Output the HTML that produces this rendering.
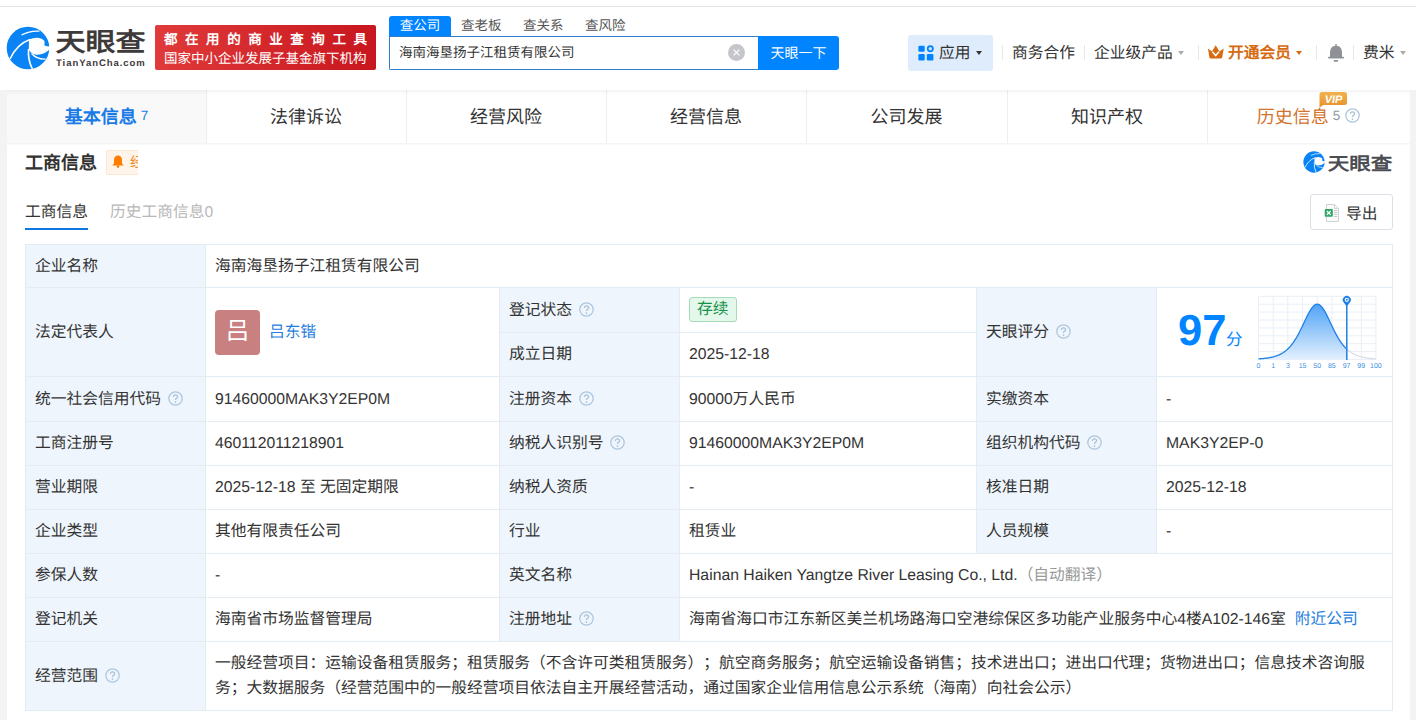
<!DOCTYPE html>
<html lang="zh-CN"><head><meta charset="utf-8">
<style>
*{margin:0;padding:0;box-sizing:border-box}
html,body{text-rendering:geometricPrecision;text-spacing-trim:space-all;width:1416px;height:720px;overflow:hidden;background:#f3f3f3;font-family:"Liberation Sans",sans-serif;color:#333}
.a{position:absolute}
.c{position:absolute;border:1px solid #e3ebf3}
.ct{position:absolute;left:0;top:0;right:0;bottom:0;display:flex;align-items:center;font-size:15.75px;white-space:nowrap}
.ln{position:absolute;background:#e3ebf3}
.in{line-height:23px}
.z{position:relative;top:0px}
.qs{margin-left:6.5px;position:relative;top:-1px;vertical-align:middle}
.av{display:block;width:45px;height:45px;border-radius:4px;background:#c98080;color:#fff;font-size:24px;line-height:44px;text-align:center}
.lk{color:#1f80e0}
.tag{display:block;height:25px;line-height:23px;padding:0 7px;border:1px solid #a6dab8;background:#e3f8ea;color:#17904a;border-radius:3px;font-size:15.75px;margin-top:-1px}
.scope{white-space:normal;line-height:25px;width:1160px}
</style></head><body>
<!-- header -->
<div class="a" style="left:0;top:0;width:1416px;height:90px;background:#fff"></div>
<div class="a" style="left:0;top:6px;width:1416px;height:1px;background:#e3e3e3"></div>

<!-- logo -->
<svg class="a" style="left:4px;top:24px" width="48" height="48" viewBox="0 0 48 48"><circle cx="24" cy="24" r="21.3" fill="#0a84f5"/><path d="M25 15.5Q35 11.5 40.5 17L40.5 21.5Q43 22.5 46 22.5L46 25Q40 31.5 31 30.5Q26.5 29.5 24.8 25.5Z" fill="#fff"/><path d="M17.5 11Q26 6.5 35.5 7.2" fill="none" stroke="#fff" stroke-width="1.3"/><path d="M6 35Q13 20 26 15.5" fill="none" stroke="#fff" stroke-width="1.6"/><path d="M24.6 25Q23.6 36 28.6 45.5" fill="none" stroke="#fff" stroke-width="1.6"/><path d="M27.5 29.5Q33 35.5 41.5 35" fill="none" stroke="#fff" stroke-width="1.3"/></svg>
<div class="a" style="left:55.5px;top:29px;font-size:30px;font-weight:bold;color:#3e3a39;line-height:34px;letter-spacing:0px;transform:scaleY(0.86);transform-origin:0 0">天眼查</div>
<div class="a" style="left:56px;top:57.5px;font-size:9.5px;font-weight:bold;color:#3e3a39;line-height:12px;letter-spacing:0.95px">TianYanCha.com</div>

<!-- red badge -->
<div class="a" style="left:155px;top:25px;width:221px;height:45px;background:linear-gradient(90deg,#e03a3a,#c8161e);border-radius:2px"></div>
<div class="a" style="left:164px;top:31px;font-size:13.5px;color:#fff;line-height:18px;letter-spacing:7.55px;font-weight:bold">都在用的商业查询工具</div>
<div class="a" style="left:164px;top:49.5px;font-size:13.5px;color:#fff;line-height:18px">国家中小企业发展子基金旗下机构</div>

<!-- search -->
<div class="a" style="left:389px;top:16px;width:62px;height:21px;background:#0084ff;border-radius:3px 3px 0 0"></div>
<div class="a" style="left:389px;top:16px;width:62px;line-height:19px;text-align:center;font-size:13.5px;color:#fff">查公司</div>
<div class="a" style="left:461px;top:16px;line-height:19px;font-size:13.5px;color:#555">查老板</div>
<div class="a" style="left:523px;top:16px;line-height:19px;font-size:13.5px;color:#555">查关系</div>
<div class="a" style="left:585px;top:16px;line-height:19px;font-size:13.5px;color:#555">查风险</div>
<div class="a" style="left:389px;top:36px;width:370px;height:34px;border:1px solid #2f7fd0;border-right:none;background:#fff;border-radius:0 0 0 2px"></div>
<div class="a" style="left:399px;top:35px;line-height:35px;font-size:13.5px;color:#333">海南海垦扬子江租赁有限公司</div>
<svg class="a" style="left:728px;top:44px" width="17" height="17" viewBox="0 0 17 17"><circle cx="8.5" cy="8.5" r="8.5" fill="#c4c6cc"/><path d="M5.6 5.6l5.8 5.8M11.4 5.6l-5.8 5.8" stroke="#fff" stroke-width="1.2"/></svg>
<div class="a" style="left:758px;top:36px;width:81px;height:34px;background:#0084ff;border-radius:0 3px 3px 0;color:#fff;font-size:14px;line-height:34px;text-align:center">天眼一下</div>

<!-- right nav -->
<div class="a" style="left:908px;top:35px;width:85px;height:36px;background:#deecfb;border-radius:3px"></div>
<svg class="a" style="left:918px;top:45px" width="16" height="16" viewBox="0 0 16 16"><rect x="0.4" y="0.7" width="6.3" height="6.1" rx="1.2" fill="#0084ff"/><circle cx="12.3" cy="3.75" r="2.6" fill="#bfe0ff" stroke="#0084ff" stroke-width="1.7"/><rect x="0.4" y="9.1" width="6.3" height="6.4" rx="1.2" fill="#0084ff"/><rect x="8.8" y="9.1" width="6.6" height="6.4" rx="1.2" fill="#0084ff"/></svg>
<div class="a" style="left:939px;top:42px;line-height:24px;font-size:15.75px;color:#333">应用</div>
<div class="a" style="left:976px;top:51px;width:0;height:0;border-left:3.7px solid transparent;border-right:3.7px solid transparent;border-top:4px solid #333"></div>

<div class="a" style="left:1002px;top:45px;width:1px;height:15px;background:#e8e8e8"></div>
<div class="a" style="left:1012px;top:42px;line-height:24px;font-size:15.75px;color:#333">商务合作</div>
<div class="a" style="left:1084px;top:45px;width:1px;height:15px;background:#e8e8e8"></div>
<div class="a" style="left:1094px;top:42px;line-height:24px;font-size:15.75px;color:#333">企业级产品</div>
<div class="a" style="left:1178px;top:51px;width:0;height:0;border-left:3.7px solid transparent;border-right:3.7px solid transparent;border-top:4px solid #aaa"></div>
<div class="a" style="left:1198px;top:45px;width:1px;height:15px;background:#e8e8e8"></div>
<svg class="a" style="left:1207px;top:44px" width="18" height="16" viewBox="0 0 18 16"><path d="M1 4.5L5 7.6L8.7 1.2L12.4 7.6L16.7 4.5L15.3 13Q15 14.6 13.5 14.6L4 14.6Q2.5 14.6 2.3 13Z" fill="#d66b12"/><path d="M5.4 7.7L8.7 11.6L12 7.7" fill="none" stroke="#fff" stroke-width="1.5"/></svg>
<div class="a" style="left:1228px;top:42px;line-height:24px;font-size:15.75px;color:#d66b12;font-weight:bold">开通会员</div>
<div class="a" style="left:1296px;top:51px;width:0;height:0;border-left:3.7px solid transparent;border-right:3.7px solid transparent;border-top:4px solid #d66b12"></div>
<div class="a" style="left:1316px;top:45px;width:1px;height:15px;background:#e8e8e8"></div>
<svg class="a" style="left:1327px;top:43px" width="18" height="20" viewBox="0 0 18 20"><path d="M9 2.8C4.6 2.8 3 6 3 10L3 14.2L15 14.2L15 10C15 6 13.4 2.8 9 2.8Z" fill="#8e9297"/><rect x="8.3" y="1" width="1.4" height="2.5" fill="#8e9297"/><rect x="1" y="13.8" width="16" height="1.7" rx=".8" fill="#8e9297"/><rect x="6.6" y="17" width="4.6" height="1.7" rx=".8" fill="#8e9297"/></svg>
<div class="a" style="left:1353px;top:45px;width:1px;height:15px;background:#e8e8e8"></div>
<div class="a" style="left:1363px;top:42px;line-height:24px;font-size:15.75px;color:#333">费米</div>
<div class="a" style="left:1400px;top:51px;width:0;height:0;border-left:3.7px solid transparent;border-right:3.7px solid transparent;border-top:4px solid #aaa"></div>

<!-- tabs bar -->
<div class="a" style="left:7px;top:90px;width:1403px;height:53px;background:#fff"></div>
<div class="a" style="left:7px;top:90px;width:199px;height:53px;background:#f9f9fa"></div>
<div class="a" style="left:7px;top:91px;width:199px;line-height:53px;text-align:center;font-size:18px;color:#1a7ae6;font-weight:bold">基本信息<span style="font-size:13.5px;font-weight:normal;margin-left:4px;position:relative;top:-3px">7</span></div>
<div class="a" style="left:206px;top:90px;width:1px;height:53px;background:#eee"></div>
<div class="a" style="left:206px;top:91px;width:200px;line-height:53px;text-align:center;font-size:18px;color:#333">法律诉讼</div>
<div class="a" style="left:406px;top:90px;width:1px;height:53px;background:#eee"></div>
<div class="a" style="left:406px;top:91px;width:200px;line-height:53px;text-align:center;font-size:18px;color:#333">经营风险</div>
<div class="a" style="left:606px;top:90px;width:1px;height:53px;background:#eee"></div>
<div class="a" style="left:606px;top:91px;width:200px;line-height:53px;text-align:center;font-size:18px;color:#333">经营信息</div>
<div class="a" style="left:806px;top:90px;width:1px;height:53px;background:#eee"></div>
<div class="a" style="left:806px;top:91px;width:201px;line-height:53px;text-align:center;font-size:18px;color:#333">公司发展</div>
<div class="a" style="left:1007px;top:90px;width:1px;height:53px;background:#eee"></div>
<div class="a" style="left:1007px;top:91px;width:200px;line-height:53px;text-align:center;font-size:18px;color:#333">知识产权</div>
<div class="a" style="left:1207px;top:90px;width:1px;height:53px;background:#eee"></div>
<div class="a" style="left:1207px;top:91px;width:203px;line-height:53px;text-align:center;font-size:18px;color:#d2732e">历史信息<span style="font-size:13.5px;color:#8e99a5;margin-left:4px;position:relative;top:-3px">5</span><svg class="qs" style="vertical-align:-1px;margin-left:5px" width="15" height="15" viewBox="0 0 15 15"><circle cx="7.5" cy="7.5" r="6.7" fill="none" stroke="#aec6de" stroke-width="1.25"/><path d="M5.4 5.9C5.4 4.6 6.3 3.8 7.5 3.8C8.7 3.8 9.6 4.6 9.6 5.7C9.6 6.8 8.5 7.1 7.9 7.8C7.6 8.1 7.5 8.5 7.5 9.1" fill="none" stroke="#a8c0d8" stroke-width="1.25"/><circle cx="7.5" cy="11.1" r=".85" fill="#a8c0d8"/></svg></div>
<svg class="a" style="left:1318px;top:91px" width="30" height="17" viewBox="0 0 30 17"><defs><linearGradient id="vg" x1="0" y1="0" x2="0" y2="1"><stop offset="0" stop-color="#f4b54e"/><stop offset="1" stop-color="#e4902c"/></linearGradient></defs><path d="M4 1h22.5a2.5 2.5 0 0 1 2.5 2.5v8a2.5 2.5 0 0 1-2.5 2.5H5.5L1.5 16.5L1.5 3.5A2.5 2.5 0 0 1 4 1z" fill="url(#vg)"/><text x="15.5" y="11.6" text-anchor="middle" font-family="Liberation Sans, sans-serif" font-size="11" font-weight="bold" font-style="italic" fill="#fff">VIP</text></svg>
<div class="a" style="left:7px;top:90px;width:1403px;height:5px;background:linear-gradient(rgba(0,0,0,0.045),rgba(0,0,0,0))"></div>
<!-- card -->
<div class="a" style="left:7px;top:143px;width:1403px;height:577px;background:#fff"></div>
<div class="a" style="left:7px;top:143px;width:1403px;height:2px;background:linear-gradient(rgba(0,0,0,0.05),rgba(0,0,0,0.01))"></div>
<div class="a" style="left:25px;top:149px;line-height:28px;font-size:18px;font-weight:bold;color:#333">工商信息</div>
<div class="a" style="left:106px;top:150px;width:32px;height:25px;background:#fff4ea;border:1px solid #fbe6d2;border-right:none;border-radius:2px 0 0 2px"></div>
<svg class="a" style="left:112px;top:155px" width="12" height="13" viewBox="0 0 12 13"><path d="M6 0.5c-2.4 0-4 1.8-4 4.2v3.8L0.3 10.6h11.4L10 8.5V4.7C10 2.3 8.4 0.5 6 0.5z" fill="#ff7e00"/><circle cx="6" cy="11.6" r="1.3" fill="#ff7e00"/></svg>
<div class="a" style="left:130px;top:151px;width:7.5px;height:22px;overflow:hidden;"><div style="font-size:14px;line-height:22px;color:#e8891c">经</div></div>

<!-- right logo -->
<svg class="a" style="left:1301.9px;top:150px" width="24" height="24" viewBox="0 0 48 48"><circle cx="24" cy="24" r="21.3" fill="#0a84f5"/><path d="M25 15.5Q35 11.5 40.5 17L40.5 21.5Q43 22.5 46 22.5L46 25Q40 31.5 31 30.5Q26.5 29.5 24.8 25.5Z" fill="#fff"/><path d="M17.5 11Q26 6.5 35.5 7.2" fill="none" stroke="#fff" stroke-width="1.3"/><path d="M6 35Q13 20 26 15.5" fill="none" stroke="#fff" stroke-width="1.6"/><path d="M24.6 25Q23.6 36 28.6 45.5" fill="none" stroke="#fff" stroke-width="1.6"/><path d="M27.5 29.5Q33 35.5 41.5 35" fill="none" stroke="#fff" stroke-width="1.3"/></svg>
<div class="a" style="left:1327.8px;top:154px;font-size:21.5px;font-weight:bold;color:#4b4d52;line-height:24px;transform:scaleY(0.84);transform-origin:0 0">天眼查</div>

<!-- subtabs -->
<div class="a" style="left:25px;top:200.5px;line-height:24px;font-size:15.75px;color:#333">工商信息</div>
<div class="a" style="left:25px;top:228px;width:63px;height:2px;background:#0f78e0"></div>
<div class="a" style="left:110px;top:200.5px;line-height:24px;font-size:15.75px;color:#b8b8b8">历史工商信息0</div>
<div class="a" style="left:1310px;top:194px;width:83px;height:36px;border:1px solid #dcdfe6;border-radius:3px;background:#fff"></div>
<svg class="a" style="left:1324px;top:203px" width="17" height="19" viewBox="0 0 17 19"><path d="M2.5 1.5h8l4 4v13h-12z" fill="#fafafa" stroke="#cfd2d6" stroke-width="1"/><path d="M10.5 1.5v4h4" fill="none" stroke="#cfd2d6"/><path d="M10 7.5h3.3M10 9.5h3.3M10 11.5h3.3M10 13.5h3.3" stroke="#c9cccf" stroke-width="1"/><rect x="0.7" y="6" width="8.1" height="7.8" rx="1" fill="#2ea560"/><path d="M2.8 8l3.9 3.9M6.7 8l-3.9 3.9" stroke="#fff" stroke-width="1.3"/></svg>
<div class="a" style="left:1346px;top:202.5px;line-height:24px;font-size:15.75px;color:#333">导出</div>

<!-- table -->
<div class="c" style="left:25px;top:244px;width:181px;height:44px;background:#eef5fc;"><div class="ct" style="padding-left:9px"><div class="in"><span class="z">企业名称</span></div></div></div>
<div class="c" style="left:205px;top:244px;width:1188px;height:44px;background:#fff;"><div class="ct" style="padding-left:9px"><div class="in"><span class="z">海南海垦扬子江租赁有限公司</span></div></div></div>
<div class="c" style="left:25px;top:287px;width:181px;height:90px;background:#eef5fc;"><div class="ct" style="padding-left:9px"><div class="in"><span class="z">法定代表人</span></div></div></div>
<div class="c" style="left:205px;top:287px;width:295px;height:90px;background:#fff;"><div class="ct" style="padding-left:9px"><div class="in"><div style="display:flex;align-items:center"><span class="av"><span class="z">吕</span></span><span class="lk" style="margin-left:9px;position:relative;top:0.5px"><span class="z">吕东锴</span></span></div></div></div></div>
<div class="c" style="left:499px;top:287px;width:181px;height:46px;background:#eef5fc;"><div class="ct" style="padding-left:9px"><div class="in"><span class="z">登记状态</span><svg class="qs" width="15" height="15" viewBox="0 0 15 15"><circle cx="7.5" cy="7.5" r="6.7" fill="none" stroke="#aec6de" stroke-width="1.25"/><path d="M5.4 5.9C5.4 4.6 6.3 3.8 7.5 3.8C8.7 3.8 9.6 4.6 9.6 5.7C9.6 6.8 8.5 7.1 7.9 7.8C7.6 8.1 7.5 8.5 7.5 9.1" fill="none" stroke="#a8c0d8" stroke-width="1.25"/><circle cx="7.5" cy="11.1" r=".85" fill="#a8c0d8"/></svg></div></div></div>
<div class="c" style="left:679px;top:287px;width:298px;height:46px;background:#fff;"><div class="ct" style="padding-left:9px"><div class="in"><div class="tag"><span class="z">存续</span></div></div></div></div>
<div class="c" style="left:499px;top:332px;width:181px;height:45px;background:#eef5fc;"><div class="ct" style="padding-left:9px"><div class="in"><span class="z">成立日期</span></div></div></div>
<div class="c" style="left:679px;top:332px;width:298px;height:45px;background:#fff;"><div class="ct" style="padding-left:9px"><div class="in">2025-12-18</div></div></div>
<div class="c" style="left:976px;top:287px;width:181px;height:90px;background:#eef5fc;"><div class="ct" style="padding-left:9px"><div class="in"><span class="z">天眼评分</span><svg class="qs" width="15" height="15" viewBox="0 0 15 15"><circle cx="7.5" cy="7.5" r="6.7" fill="none" stroke="#aec6de" stroke-width="1.25"/><path d="M5.4 5.9C5.4 4.6 6.3 3.8 7.5 3.8C8.7 3.8 9.6 4.6 9.6 5.7C9.6 6.8 8.5 7.1 7.9 7.8C7.6 8.1 7.5 8.5 7.5 9.1" fill="none" stroke="#a8c0d8" stroke-width="1.25"/><circle cx="7.5" cy="11.1" r=".85" fill="#a8c0d8"/></svg></div></div></div>
<div class="c" style="left:1156px;top:287px;width:237px;height:90px;background:#fff;"><div class="ct" style="padding-left:9px"><div class="in"></div></div></div>
<div class="c" style="left:25px;top:376px;width:181px;height:46px;background:#eef5fc;"><div class="ct" style="padding-left:9px"><div class="in"><span class="z">统一社会信用代码</span><svg class="qs" width="15" height="15" viewBox="0 0 15 15"><circle cx="7.5" cy="7.5" r="6.7" fill="none" stroke="#aec6de" stroke-width="1.25"/><path d="M5.4 5.9C5.4 4.6 6.3 3.8 7.5 3.8C8.7 3.8 9.6 4.6 9.6 5.7C9.6 6.8 8.5 7.1 7.9 7.8C7.6 8.1 7.5 8.5 7.5 9.1" fill="none" stroke="#a8c0d8" stroke-width="1.25"/><circle cx="7.5" cy="11.1" r=".85" fill="#a8c0d8"/></svg></div></div></div>
<div class="c" style="left:205px;top:376px;width:295px;height:46px;background:#fff;"><div class="ct" style="padding-left:9px"><div class="in">91460000MAK3Y2EP0M</div></div></div>
<div class="c" style="left:499px;top:376px;width:181px;height:46px;background:#eef5fc;"><div class="ct" style="padding-left:9px"><div class="in"><span class="z">注册资本</span><svg class="qs" width="15" height="15" viewBox="0 0 15 15"><circle cx="7.5" cy="7.5" r="6.7" fill="none" stroke="#aec6de" stroke-width="1.25"/><path d="M5.4 5.9C5.4 4.6 6.3 3.8 7.5 3.8C8.7 3.8 9.6 4.6 9.6 5.7C9.6 6.8 8.5 7.1 7.9 7.8C7.6 8.1 7.5 8.5 7.5 9.1" fill="none" stroke="#a8c0d8" stroke-width="1.25"/><circle cx="7.5" cy="11.1" r=".85" fill="#a8c0d8"/></svg></div></div></div>
<div class="c" style="left:679px;top:376px;width:298px;height:46px;background:#fff;"><div class="ct" style="padding-left:9px"><div class="in">90000<span class="z">万人民币</span></div></div></div>
<div class="c" style="left:976px;top:376px;width:181px;height:46px;background:#eef5fc;"><div class="ct" style="padding-left:9px"><div class="in"><span class="z">实缴资本</span></div></div></div>
<div class="c" style="left:1156px;top:376px;width:237px;height:46px;background:#fff;"><div class="ct" style="padding-left:9px"><div class="in">-</div></div></div>
<div class="c" style="left:25px;top:421px;width:181px;height:45px;background:#eef5fc;"><div class="ct" style="padding-left:9px"><div class="in"><span class="z">工商注册号</span></div></div></div>
<div class="c" style="left:205px;top:421px;width:295px;height:45px;background:#fff;"><div class="ct" style="padding-left:9px"><div class="in">460112011218901</div></div></div>
<div class="c" style="left:499px;top:421px;width:181px;height:45px;background:#eef5fc;"><div class="ct" style="padding-left:9px"><div class="in"><span class="z">纳税人识别号</span><svg class="qs" width="15" height="15" viewBox="0 0 15 15"><circle cx="7.5" cy="7.5" r="6.7" fill="none" stroke="#aec6de" stroke-width="1.25"/><path d="M5.4 5.9C5.4 4.6 6.3 3.8 7.5 3.8C8.7 3.8 9.6 4.6 9.6 5.7C9.6 6.8 8.5 7.1 7.9 7.8C7.6 8.1 7.5 8.5 7.5 9.1" fill="none" stroke="#a8c0d8" stroke-width="1.25"/><circle cx="7.5" cy="11.1" r=".85" fill="#a8c0d8"/></svg></div></div></div>
<div class="c" style="left:679px;top:421px;width:298px;height:45px;background:#fff;"><div class="ct" style="padding-left:9px"><div class="in">91460000MAK3Y2EP0M</div></div></div>
<div class="c" style="left:976px;top:421px;width:181px;height:45px;background:#eef5fc;"><div class="ct" style="padding-left:9px"><div class="in"><span class="z">组织机构代码</span><svg class="qs" width="15" height="15" viewBox="0 0 15 15"><circle cx="7.5" cy="7.5" r="6.7" fill="none" stroke="#aec6de" stroke-width="1.25"/><path d="M5.4 5.9C5.4 4.6 6.3 3.8 7.5 3.8C8.7 3.8 9.6 4.6 9.6 5.7C9.6 6.8 8.5 7.1 7.9 7.8C7.6 8.1 7.5 8.5 7.5 9.1" fill="none" stroke="#a8c0d8" stroke-width="1.25"/><circle cx="7.5" cy="11.1" r=".85" fill="#a8c0d8"/></svg></div></div></div>
<div class="c" style="left:1156px;top:421px;width:237px;height:45px;background:#fff;"><div class="ct" style="padding-left:9px"><div class="in">MAK3Y2EP-0</div></div></div>
<div class="c" style="left:25px;top:465px;width:181px;height:45px;background:#eef5fc;"><div class="ct" style="padding-left:9px"><div class="in"><span class="z">营业期限</span></div></div></div>
<div class="c" style="left:205px;top:465px;width:295px;height:45px;background:#fff;"><div class="ct" style="padding-left:9px"><div class="in">2025-12-18 <span class="z">至</span> <span class="z">无固定期限</span></div></div></div>
<div class="c" style="left:499px;top:465px;width:181px;height:45px;background:#eef5fc;"><div class="ct" style="padding-left:9px"><div class="in"><span class="z">纳税人资质</span></div></div></div>
<div class="c" style="left:679px;top:465px;width:298px;height:45px;background:#fff;"><div class="ct" style="padding-left:9px"><div class="in">-</div></div></div>
<div class="c" style="left:976px;top:465px;width:181px;height:45px;background:#eef5fc;"><div class="ct" style="padding-left:9px"><div class="in"><span class="z">核准日期</span></div></div></div>
<div class="c" style="left:1156px;top:465px;width:237px;height:45px;background:#fff;"><div class="ct" style="padding-left:9px"><div class="in">2025-12-18</div></div></div>
<div class="c" style="left:25px;top:509px;width:181px;height:45px;background:#eef5fc;"><div class="ct" style="padding-left:9px"><div class="in"><span class="z">企业类型</span></div></div></div>
<div class="c" style="left:205px;top:509px;width:295px;height:45px;background:#fff;"><div class="ct" style="padding-left:9px"><div class="in"><span class="z">其他有限责任公司</span></div></div></div>
<div class="c" style="left:499px;top:509px;width:181px;height:45px;background:#eef5fc;"><div class="ct" style="padding-left:9px"><div class="in"><span class="z">行业</span></div></div></div>
<div class="c" style="left:679px;top:509px;width:298px;height:45px;background:#fff;"><div class="ct" style="padding-left:9px"><div class="in"><span class="z">租赁业</span></div></div></div>
<div class="c" style="left:976px;top:509px;width:181px;height:45px;background:#eef5fc;"><div class="ct" style="padding-left:9px"><div class="in"><span class="z">人员规模</span></div></div></div>
<div class="c" style="left:1156px;top:509px;width:237px;height:45px;background:#fff;"><div class="ct" style="padding-left:9px"><div class="in">-</div></div></div>
<div class="c" style="left:25px;top:553px;width:181px;height:45px;background:#eef5fc;"><div class="ct" style="padding-left:9px"><div class="in"><span class="z">参保人数</span></div></div></div>
<div class="c" style="left:205px;top:553px;width:295px;height:45px;background:#fff;"><div class="ct" style="padding-left:9px"><div class="in">-</div></div></div>
<div class="c" style="left:499px;top:553px;width:181px;height:45px;background:#eef5fc;"><div class="ct" style="padding-left:9px"><div class="in"><span class="z">英文名称</span></div></div></div>
<div class="c" style="left:679px;top:553px;width:714px;height:45px;background:#fff;"><div class="ct" style="padding-left:9px"><div class="in">Hainan Haiken Yangtze River Leasing Co., Ltd.<span style="color:#999"><span class="z">（自动翻译）</span></span></div></div></div>
<div class="c" style="left:25px;top:597px;width:181px;height:45px;background:#eef5fc;"><div class="ct" style="padding-left:9px"><div class="in"><span class="z">登记机关</span></div></div></div>
<div class="c" style="left:205px;top:597px;width:295px;height:45px;background:#fff;"><div class="ct" style="padding-left:9px"><div class="in"><span class="z">海南省市场监督管理局</span></div></div></div>
<div class="c" style="left:499px;top:597px;width:181px;height:45px;background:#eef5fc;"><div class="ct" style="padding-left:9px"><div class="in"><span class="z">注册地址</span><svg class="qs" width="15" height="15" viewBox="0 0 15 15"><circle cx="7.5" cy="7.5" r="6.7" fill="none" stroke="#aec6de" stroke-width="1.25"/><path d="M5.4 5.9C5.4 4.6 6.3 3.8 7.5 3.8C8.7 3.8 9.6 4.6 9.6 5.7C9.6 6.8 8.5 7.1 7.9 7.8C7.6 8.1 7.5 8.5 7.5 9.1" fill="none" stroke="#a8c0d8" stroke-width="1.25"/><circle cx="7.5" cy="11.1" r=".85" fill="#a8c0d8"/></svg></div></div></div>
<div class="c" style="left:679px;top:597px;width:714px;height:45px;background:#fff;"><div class="ct" style="padding-left:9px"><div class="in"><span class="z">海南省海口市江东新区美兰机场路海口空港综保区多功能产业服务中心</span>4<span class="z">楼</span>A102-146<span class="z">室</span><span class="lk" style="margin-left:9px"><span class="z">附近公司</span></span></div></div></div>
<div class="c" style="left:25px;top:641px;width:181px;height:70px;background:#eef5fc;"><div class="ct" style="padding-left:9px"><div class="in"><span class="z">经营范围</span><svg class="qs" width="15" height="15" viewBox="0 0 15 15"><circle cx="7.5" cy="7.5" r="6.7" fill="none" stroke="#aec6de" stroke-width="1.25"/><path d="M5.4 5.9C5.4 4.6 6.3 3.8 7.5 3.8C8.7 3.8 9.6 4.6 9.6 5.7C9.6 6.8 8.5 7.1 7.9 7.8C7.6 8.1 7.5 8.5 7.5 9.1" fill="none" stroke="#a8c0d8" stroke-width="1.25"/><circle cx="7.5" cy="11.1" r=".85" fill="#a8c0d8"/></svg></div></div></div>
<div class="c" style="left:205px;top:641px;width:1188px;height:70px;background:#fff;"><div class="ct" style="padding-left:9px"><div class="in"><div class="scope"><span class="z">一般经营项目：运输设备租赁服务；租赁服务（不含许可类租赁服务）；航空商务服务；航空运输设备销售；技术进出口；进出口代理；货物进出口；信息技术咨询服务；大数据服务（经营范围中的一般经营项目依法自主开展经营活动，通过国家企业信用信息公示系统（海南）向社会公示）</span></div></div></div></div>
<!-- score -->
<div class="a" style="left:1178px;top:305.5px;font-size:43.5px;font-weight:bold;color:#0084ff;line-height:50px">97</div>
<div class="a" style="left:1226px;top:329px;font-size:16.5px;color:#0084ff;line-height:22px">分</div>
<svg class="a" style="left:1250px;top:290px" width="135" height="82" viewBox="1250 290 135 82"><defs><linearGradient id="gf" x1="0" y1="0" x2="0" y2="1"><stop offset="0" stop-color="#4fa3f7"/><stop offset="1" stop-color="#e3f0fd"/></linearGradient></defs><line x1="1258.50" y1="296.3" x2="1258.50" y2="359.5" stroke="#e9eff6" stroke-width="1"/><line x1="1273.17" y1="296.3" x2="1273.17" y2="359.5" stroke="#e9eff6" stroke-width="1"/><line x1="1287.85" y1="296.3" x2="1287.85" y2="359.5" stroke="#e9eff6" stroke-width="1"/><line x1="1302.53" y1="296.3" x2="1302.53" y2="359.5" stroke="#e9eff6" stroke-width="1"/><line x1="1317.20" y1="296.3" x2="1317.20" y2="359.5" stroke="#e9eff6" stroke-width="1"/><line x1="1331.88" y1="296.3" x2="1331.88" y2="359.5" stroke="#e9eff6" stroke-width="1"/><line x1="1346.55" y1="296.3" x2="1346.55" y2="359.5" stroke="#e9eff6" stroke-width="1"/><line x1="1361.22" y1="296.3" x2="1361.22" y2="359.5" stroke="#e9eff6" stroke-width="1"/><line x1="1375.90" y1="296.3" x2="1375.90" y2="359.5" stroke="#e9eff6" stroke-width="1"/><line x1="1258.5" y1="296.30" x2="1375.9" y2="296.30" stroke="#e9eff6" stroke-width="1"/><line x1="1258.5" y1="304.20" x2="1375.9" y2="304.20" stroke="#e9eff6" stroke-width="1"/><line x1="1258.5" y1="312.10" x2="1375.9" y2="312.10" stroke="#e9eff6" stroke-width="1"/><line x1="1258.5" y1="320.00" x2="1375.9" y2="320.00" stroke="#e9eff6" stroke-width="1"/><line x1="1258.5" y1="327.90" x2="1375.9" y2="327.90" stroke="#e9eff6" stroke-width="1"/><line x1="1258.5" y1="335.80" x2="1375.9" y2="335.80" stroke="#e9eff6" stroke-width="1"/><line x1="1258.5" y1="343.70" x2="1375.9" y2="343.70" stroke="#e9eff6" stroke-width="1"/><line x1="1258.5" y1="351.60" x2="1375.9" y2="351.60" stroke="#e9eff6" stroke-width="1"/><line x1="1258.5" y1="359.50" x2="1375.9" y2="359.50" stroke="#e9eff6" stroke-width="1"/><polygon points="1258.5,359.5 1258.50,358.88 1259.00,358.85 1259.50,358.81 1260.00,358.78 1260.50,358.74 1261.00,358.70 1261.50,358.66 1262.00,358.62 1262.50,358.58 1263.00,358.53 1263.50,358.48 1264.00,358.43 1264.50,358.37 1265.00,358.32 1265.50,358.26 1266.00,358.19 1266.50,358.13 1267.00,358.06 1267.50,357.99 1268.00,357.91 1268.50,357.83 1269.00,357.74 1269.50,357.66 1270.00,357.56 1270.50,357.47 1271.00,357.36 1271.50,357.26 1272.00,357.14 1272.50,357.02 1273.00,356.90 1273.50,356.77 1274.00,356.63 1274.50,356.49 1275.00,356.34 1275.50,356.19 1276.00,356.02 1276.50,355.85 1277.00,355.67 1277.50,355.48 1278.00,355.28 1278.50,355.07 1279.00,354.86 1279.50,354.63 1280.00,354.39 1280.50,354.14 1281.00,353.88 1281.50,353.61 1282.00,353.32 1282.50,353.03 1283.00,352.72 1283.50,352.39 1284.00,352.05 1284.50,351.70 1285.00,351.33 1285.50,350.94 1286.00,350.54 1286.50,350.12 1287.00,349.69 1287.50,349.23 1288.00,348.76 1288.50,348.27 1289.00,347.76 1289.50,347.23 1290.00,346.67 1290.50,346.10 1291.00,345.51 1291.50,344.89 1292.00,344.25 1292.50,343.59 1293.00,342.91 1293.50,342.21 1294.00,341.48 1294.50,340.73 1295.00,339.95 1295.50,339.16 1296.00,338.33 1296.50,337.49 1297.00,336.63 1297.50,335.74 1298.00,334.83 1298.50,333.91 1299.00,332.96 1299.50,331.99 1300.00,331.01 1300.50,330.01 1301.00,328.99 1301.50,327.97 1302.00,326.93 1302.50,325.88 1303.00,324.82 1303.50,323.76 1304.00,322.70 1304.50,321.63 1305.00,320.57 1305.50,319.52 1306.00,318.47 1306.50,317.43 1307.00,316.41 1307.50,315.41 1308.00,314.43 1308.50,313.47 1309.00,312.55 1309.50,311.65 1310.00,310.79 1310.50,309.97 1311.00,309.19 1311.50,308.46 1312.00,307.78 1312.50,307.14 1313.00,306.57 1313.50,306.05 1314.00,305.59 1314.50,305.20 1315.00,304.86 1315.50,304.60 1316.00,304.40 1316.50,304.27 1317.00,304.21 1317.50,304.21 1318.00,304.29 1318.50,304.43 1319.00,304.65 1319.50,304.92 1320.00,305.27 1320.50,305.68 1321.00,306.15 1321.50,306.68 1322.00,307.27 1322.50,307.91 1323.00,308.60 1323.50,309.34 1324.00,310.13 1324.50,310.96 1325.00,311.83 1325.50,312.73 1326.00,313.66 1326.50,314.62 1327.00,315.61 1327.50,316.62 1328.00,317.64 1328.50,318.68 1329.00,319.73 1329.50,320.78 1330.00,321.85 1330.50,322.91 1331.00,323.97 1331.50,325.03 1332.00,326.09 1332.50,327.14 1333.00,328.17 1333.50,329.20 1334.00,330.21 1334.50,331.21 1335.00,332.19 1335.50,333.15 1336.00,334.09 1336.50,335.02 1337.00,335.92 1337.50,336.80 1338.00,337.66 1338.50,338.50 1339.00,339.32 1339.50,340.11 1340.00,340.88 1340.50,341.63 1341.00,342.35 1341.50,343.05 1342.00,343.73 1342.50,344.38 1343.00,345.02 1343.50,345.63 1344.00,346.22 1344.50,346.79 1345.00,347.33 1345.50,347.86 1346.00,348.37 1346.50,348.86 1346.8,359.5" fill="url(#gf)"/><polyline points="1258.50,358.88 1259.00,358.85 1259.50,358.81 1260.00,358.78 1260.50,358.74 1261.00,358.70 1261.50,358.66 1262.00,358.62 1262.50,358.58 1263.00,358.53 1263.50,358.48 1264.00,358.43 1264.50,358.37 1265.00,358.32 1265.50,358.26 1266.00,358.19 1266.50,358.13 1267.00,358.06 1267.50,357.99 1268.00,357.91 1268.50,357.83 1269.00,357.74 1269.50,357.66 1270.00,357.56 1270.50,357.47 1271.00,357.36 1271.50,357.26 1272.00,357.14 1272.50,357.02 1273.00,356.90 1273.50,356.77 1274.00,356.63 1274.50,356.49 1275.00,356.34 1275.50,356.19 1276.00,356.02 1276.50,355.85 1277.00,355.67 1277.50,355.48 1278.00,355.28 1278.50,355.07 1279.00,354.86 1279.50,354.63 1280.00,354.39 1280.50,354.14 1281.00,353.88 1281.50,353.61 1282.00,353.32 1282.50,353.03 1283.00,352.72 1283.50,352.39 1284.00,352.05 1284.50,351.70 1285.00,351.33 1285.50,350.94 1286.00,350.54 1286.50,350.12 1287.00,349.69 1287.50,349.23 1288.00,348.76 1288.50,348.27 1289.00,347.76 1289.50,347.23 1290.00,346.67 1290.50,346.10 1291.00,345.51 1291.50,344.89 1292.00,344.25 1292.50,343.59 1293.00,342.91 1293.50,342.21 1294.00,341.48 1294.50,340.73 1295.00,339.95 1295.50,339.16 1296.00,338.33 1296.50,337.49 1297.00,336.63 1297.50,335.74 1298.00,334.83 1298.50,333.91 1299.00,332.96 1299.50,331.99 1300.00,331.01 1300.50,330.01 1301.00,328.99 1301.50,327.97 1302.00,326.93 1302.50,325.88 1303.00,324.82 1303.50,323.76 1304.00,322.70 1304.50,321.63 1305.00,320.57 1305.50,319.52 1306.00,318.47 1306.50,317.43 1307.00,316.41 1307.50,315.41 1308.00,314.43 1308.50,313.47 1309.00,312.55 1309.50,311.65 1310.00,310.79 1310.50,309.97 1311.00,309.19 1311.50,308.46 1312.00,307.78 1312.50,307.14 1313.00,306.57 1313.50,306.05 1314.00,305.59 1314.50,305.20 1315.00,304.86 1315.50,304.60 1316.00,304.40 1316.50,304.27 1317.00,304.21 1317.50,304.21 1318.00,304.29 1318.50,304.43 1319.00,304.65 1319.50,304.92 1320.00,305.27 1320.50,305.68 1321.00,306.15 1321.50,306.68 1322.00,307.27 1322.50,307.91 1323.00,308.60 1323.50,309.34 1324.00,310.13 1324.50,310.96 1325.00,311.83 1325.50,312.73 1326.00,313.66 1326.50,314.62 1327.00,315.61 1327.50,316.62 1328.00,317.64 1328.50,318.68 1329.00,319.73 1329.50,320.78 1330.00,321.85 1330.50,322.91 1331.00,323.97 1331.50,325.03 1332.00,326.09 1332.50,327.14 1333.00,328.17 1333.50,329.20 1334.00,330.21 1334.50,331.21 1335.00,332.19 1335.50,333.15 1336.00,334.09 1336.50,335.02 1337.00,335.92 1337.50,336.80 1338.00,337.66 1338.50,338.50 1339.00,339.32 1339.50,340.11 1340.00,340.88 1340.50,341.63 1341.00,342.35 1341.50,343.05 1342.00,343.73 1342.50,344.38 1343.00,345.02 1343.50,345.63 1344.00,346.22 1344.50,346.79 1345.00,347.33 1345.50,347.86 1346.00,348.37 1346.50,348.86" fill="none" stroke="#1f80e6" stroke-width="1.3"/><polyline points="1346.80,349.14 1347.30,349.60 1347.80,350.04 1348.30,350.46 1348.80,350.86 1349.30,351.25 1349.80,351.62 1350.30,351.98 1350.80,352.32 1351.30,352.65 1351.80,352.96 1352.30,353.27 1352.80,353.55 1353.30,353.83 1353.80,354.09 1354.30,354.34 1354.80,354.58 1355.30,354.81 1355.80,355.03 1356.30,355.24 1356.80,355.44 1357.30,355.63 1357.80,355.81 1358.30,355.99 1358.80,356.15 1359.30,356.31 1359.80,356.46 1360.30,356.61 1360.80,356.74 1361.30,356.88 1361.80,357.00 1362.30,357.12 1362.80,357.23 1363.30,357.34 1363.80,357.45 1364.30,357.54 1364.80,357.64 1365.30,357.73 1365.80,357.81 1366.30,357.89 1366.80,357.97 1367.30,358.04 1367.80,358.11 1368.30,358.18 1368.80,358.24 1369.30,358.30 1369.80,358.36 1370.30,358.42 1370.80,358.47 1371.30,358.52 1371.80,358.57 1372.30,358.61 1372.80,358.66 1373.30,358.70 1373.80,358.74 1374.30,358.77 1374.80,358.81 1375.30,358.84 1375.80,358.87" fill="none" stroke="#d5d9de" stroke-width="1.1"/><line x1="1346.8" y1="303" x2="1346.8" y2="360" stroke="#1f80e6" stroke-width="1.5"/><path d="M1346.8 306.5L1343.6 302.3A4 4 0 1 1 1350.0 302.3Z" fill="#1f80e6"/><circle cx="1346.8" cy="299.8" r="2.1" fill="#fff"/><circle cx="1346.8" cy="299.8" r="1" fill="#1f80e6"/><text x="1258.50" y="367.8" text-anchor="middle" font-size="7" fill="#3d8fe0" font-family="Liberation Sans, sans-serif">0</text><text x="1273.17" y="367.8" text-anchor="middle" font-size="7" fill="#3d8fe0" font-family="Liberation Sans, sans-serif">1</text><text x="1287.85" y="367.8" text-anchor="middle" font-size="7" fill="#3d8fe0" font-family="Liberation Sans, sans-serif">3</text><text x="1302.53" y="367.8" text-anchor="middle" font-size="7" fill="#3d8fe0" font-family="Liberation Sans, sans-serif">15</text><text x="1317.20" y="367.8" text-anchor="middle" font-size="7" fill="#3d8fe0" font-family="Liberation Sans, sans-serif">50</text><text x="1331.88" y="367.8" text-anchor="middle" font-size="7" fill="#3d8fe0" font-family="Liberation Sans, sans-serif">85</text><text x="1346.55" y="367.8" text-anchor="middle" font-size="7" fill="#3d8fe0" font-family="Liberation Sans, sans-serif">97</text><text x="1361.22" y="367.8" text-anchor="middle" font-size="7" fill="#3d8fe0" font-family="Liberation Sans, sans-serif">99</text><text x="1375.90" y="367.8" text-anchor="middle" font-size="7" fill="#3d8fe0" font-family="Liberation Sans, sans-serif">100</text></svg>
</body></html>
